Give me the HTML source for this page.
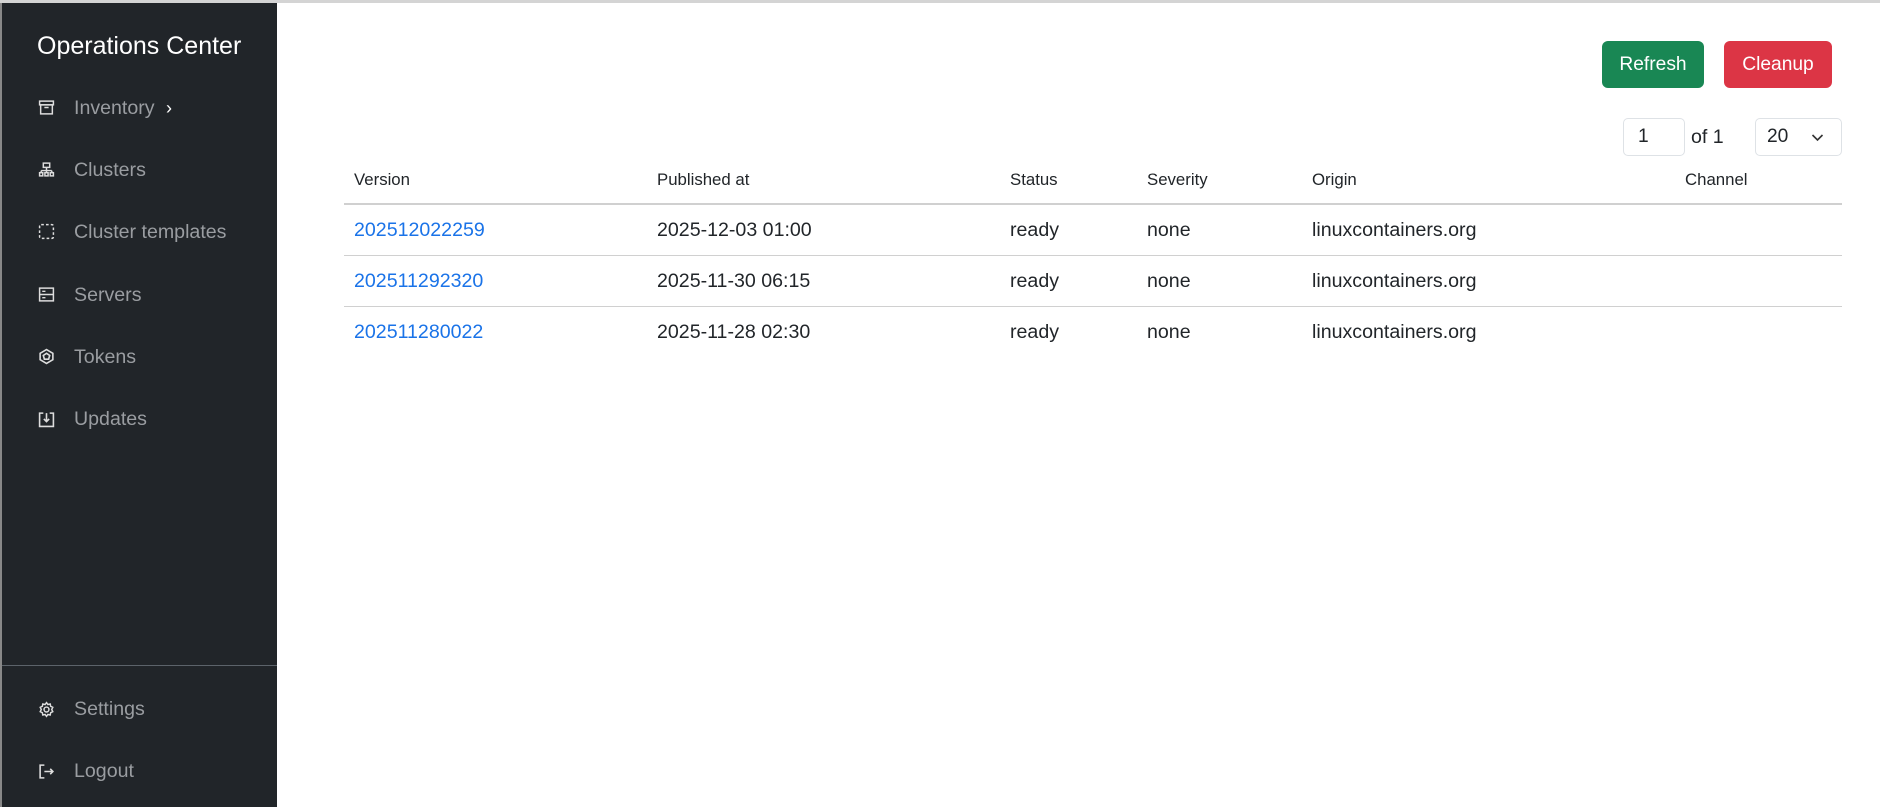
<!DOCTYPE html>
<html><head><meta charset="utf-8"><style>
*{margin:0;padding:0;box-sizing:border-box}
body{width:1880px;height:807px;overflow:hidden;background:#fff;font-family:"Liberation Sans",Arial,sans-serif;position:relative}
.topline{position:absolute;left:0;top:0;width:1880px;height:3px;background:#d4d4d4}
.sb{position:absolute;left:0;top:3px;width:277px;height:804px;background:#212529;border-left:2px solid #888}
.title{position:absolute;left:35px;top:29px;color:#fff;font-size:25px}
.nav{position:absolute;left:72px;color:#9a9da1;font-size:19.6px;line-height:24px}
.ic{position:absolute;left:36px;width:17px;height:17px}
.sep{position:absolute;left:0;top:662px;width:275px;height:1px;background:#5c636a}
.btn{position:absolute;top:41px;height:47px;border-radius:6px;color:#fff;font-size:19.2px;line-height:47px;text-align:center}
.t{position:absolute;font-size:19.6px;color:#212529;line-height:24px}
.h{position:absolute;font-size:16.8px;color:#212529;top:169px;line-height:22px}
.ln{position:absolute;left:344px;width:1498px;height:1px;background:#d0d0d0}
a{color:#1a73e8;text-decoration:none}
.box{position:absolute;border:1px solid #dee2e6;border-radius:5px;height:38px;top:118px;font-size:19.2px;line-height:36px;color:#212529}
</style></head><body>
<div class="topline"></div>
<div class="sb">
<div class="title">Operations Center</div>
<svg class="ic" style="top:96px" viewBox="0 0 16 16" fill="none" stroke="#ddd" stroke-width="1.4"><rect x="1.5" y="2" width="13" height="3.5"/><rect x="2.5" y="5.5" width="11" height="8.5"/><path d="M6 8h4"/></svg>
<div class="nav" style="top:93px">Inventory <span style="color:#fff;font-size:18px;margin-left:6px">&#x203A;</span></div>
<svg class="ic" style="top:158px" viewBox="0 0 16 16" fill="none" stroke="#ddd" stroke-width="1.4"><rect x="5" y="2" width="6" height="4"/><path d="M8 6v3M3 9h10M3 9v2M8 9v2M13 9v2"/><rect x="1.5" y="11" width="3" height="3"/><rect x="6.5" y="11" width="3" height="3"/><rect x="11.5" y="11" width="3" height="3"/></svg>
<div class="nav" style="top:155px">Clusters</div>
<svg class="ic" style="top:220px" viewBox="0 0 16 16" fill="none" stroke="#ddd" stroke-width="1.4" stroke-dasharray="2.5 2"><rect x="1.5" y="1.5" width="13" height="13" rx="1.5"/></svg>
<div class="nav" style="top:217px">Cluster templates</div>
<svg class="ic" style="top:283px" viewBox="0 0 16 16" fill="none" stroke="#ddd" stroke-width="1.4"><rect x="1.5" y="2" width="13" height="12"/><path d="M1.5 8h13M4 5h3M4 11h3"/></svg>
<div class="nav" style="top:280px">Servers</div>
<svg class="ic" style="top:345px" viewBox="0 0 16 16" fill="none" stroke="#ddd" stroke-width="1.5"><path d="M8 1.5l6 3.5v6l-6 3.5-6-3.5v-6z"/><path d="M8 5l3 2-1 3.5H6L5 7z"/></svg>
<div class="nav" style="top:342px">Tokens</div>
<svg class="ic" style="top:408px" viewBox="0 0 16 16" fill="none" stroke="#ddd" stroke-width="1.5"><path d="M5 2H1.5v12.5h13V2H11"/><path d="M8 2v8M5.5 7.5L8 10l2.5-2.5"/></svg>
<div class="nav" style="top:404px">Updates</div>
<div class="sep"></div>
<svg class="ic" style="top:698px" viewBox="0 0 16 16" fill="none" stroke="#ddd" stroke-width="1.4"><circle cx="8" cy="8" r="2.3"/><path d="M8 1.5l1.3 1.8 2.2-.5.4 2.2 2 1-1 2 1 2-2 1-.4 2.2-2.2-.5L8 14.5l-1.3-1.8-2.2.5-.4-2.2-2-1 1-2-1-2 2-1 .4-2.2 2.2.5z"/></svg>
<div class="nav" style="top:694px">Settings</div>
<svg class="ic" style="top:760px" viewBox="0 0 16 16" fill="none" stroke="#ddd" stroke-width="1.5"><path d="M6 2H2v12h4"/><path d="M6 8h8M11.5 5.5L14 8l-2.5 2.5"/></svg>
<div class="nav" style="top:756px">Logout</div>
</div>

<div class="btn" style="left:1602px;width:102px;background:#198754">Refresh</div>
<div class="btn" style="left:1724px;width:108px;background:#dc3545">Cleanup</div>
<div class="box" style="left:1623px;width:62px;padding-left:14px">1</div>
<div class="t" style="left:1691px;top:125px">of 1</div>
<div class="box" style="left:1755px;width:87px;padding-left:11px">20<svg style="position:absolute;left:55px;top:14px" width="13" height="9" viewBox="0 0 13 9" fill="none" stroke="#333" stroke-width="1.6"><path d="M1.5 2l5 5 5-5"/></svg></div>

<div class="h" style="left:354px">Version</div>
<div class="h" style="left:657px">Published at</div>
<div class="h" style="left:1010px">Status</div>
<div class="h" style="left:1147px">Severity</div>
<div class="h" style="left:1312px">Origin</div>
<div class="h" style="left:1685px">Channel</div>
<div class="ln" style="top:203px;height:2px"></div>
<div class="ln" style="top:255px"></div>
<div class="ln" style="top:306px"></div>

<div class="t" style="left:354px;top:218px"><a>202512022259</a></div>
<div class="t" style="left:657px;top:218px">2025-12-03 01:00</div>
<div class="t" style="left:1010px;top:218px">ready</div>
<div class="t" style="left:1147px;top:218px">none</div>
<div class="t" style="left:1312px;top:218px">linuxcontainers.org</div>

<div class="t" style="left:354px;top:269px"><a>202511292320</a></div>
<div class="t" style="left:657px;top:269px">2025-11-30 06:15</div>
<div class="t" style="left:1010px;top:269px">ready</div>
<div class="t" style="left:1147px;top:269px">none</div>
<div class="t" style="left:1312px;top:269px">linuxcontainers.org</div>

<div class="t" style="left:354px;top:320px"><a>202511280022</a></div>
<div class="t" style="left:657px;top:320px">2025-11-28 02:30</div>
<div class="t" style="left:1010px;top:320px">ready</div>
<div class="t" style="left:1147px;top:320px">none</div>
<div class="t" style="left:1312px;top:320px">linuxcontainers.org</div>
</body></html>
